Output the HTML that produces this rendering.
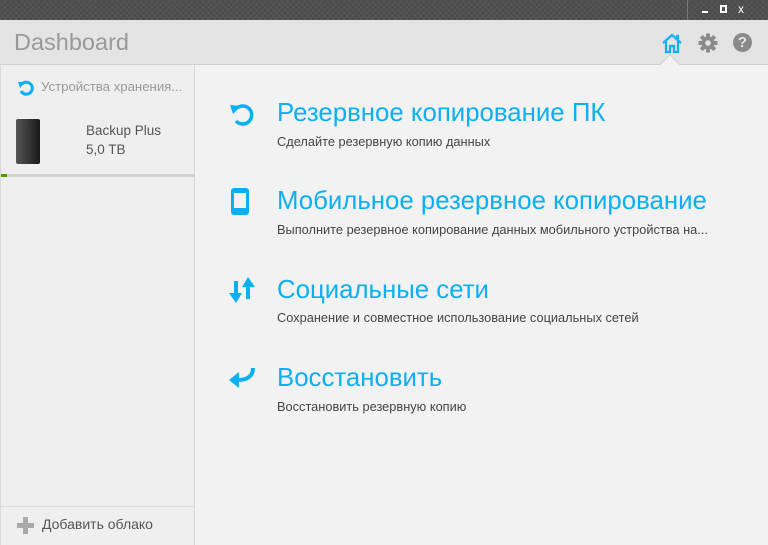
<!DOCTYPE html>
<html><head><meta charset="utf-8"><style>
*{margin:0;padding:0;box-sizing:border-box}
body{width:768px;height:545px;overflow:hidden;font-family:"Liberation Sans",sans-serif;background:#f2f2f2;position:relative}
.tb{position:absolute;left:0;top:0;width:768px;height:20px;background:#4b4b4b;background-image:repeating-linear-gradient(45deg,rgba(255,255,255,.05) 0 1px,transparent 1px 4px),repeating-linear-gradient(-45deg,rgba(255,255,255,.05) 0 1px,transparent 1px 4px)}
.hd{position:absolute;left:0;top:20px;width:768px;height:45px;background:#e4e4e4;border-bottom:1px solid #cfcfcf}
.side{position:absolute;left:0;top:65px;width:195px;height:480px;background:#efefef;border-right:1px solid #d9d9d9;border-left:1px solid #d9d9d9}
.t{position:absolute;color:#0ab0f2;font-size:25.8px;left:277px;white-space:nowrap}
.s{position:absolute;color:#444;font-size:12.8px;left:277px;white-space:nowrap}
</style></head><body>
<div class="tb"><div style="position:absolute;left:687px;top:0;width:1px;height:20px;background:#777"></div>
<div style="position:absolute;left:702px;top:11px;width:6px;height:2px;background:#fff"></div>
<div style="position:absolute;left:720px;top:5px;width:7px;height:8px;border:2px solid #fff"></div>
<div style="position:absolute;left:738px;top:2px;color:#fff;font-size:12px">x</div></div>
<div class="hd"><div style="position:absolute;left:14px;top:9px;font-size:23.5px;color:#999">Dashboard</div>
<svg style="position:absolute;left:661px;top:12px" width="22" height="22" viewBox="0 0 22 22"><path d="M2 11L11 3L20 11M5 9V20H9V14H13V20H17V9M15 4H17V7" fill="none" stroke="#0ab0f2" stroke-width="2.2"/></svg>
<svg style="position:absolute;left:698px;top:13px" width="20" height="20" viewBox="0 0 20 20"><g fill="#8a8a8a"><circle cx="10" cy="10" r="6.5"/><rect x="8" y="0.5" width="4" height="19"/><rect x="0.5" y="8" width="19" height="4"/><rect x="8" y="0.5" width="4" height="19" transform="rotate(45 10 10)"/><rect x="8" y="0.5" width="4" height="19" transform="rotate(-45 10 10)"/></g><circle cx="10" cy="10" r="2.8" fill="#e4e4e4"/></svg>
<div style="position:absolute;left:733px;top:13px;width:19px;height:19px;border-radius:50%;background:#8a8a8a;color:#e4e4e4;font-weight:bold;font-size:15px;text-align:center;line-height:19px">?</div>
<div style="position:absolute;left:663px;top:37px;width:14px;height:14px;background:#f2f2f2;border-left:1px solid #cfcfcf;border-top:1px solid #cfcfcf;transform:rotate(45deg)"></div></div>
<div class="side">
<svg style="position:absolute;left:16px;top:14px" width="18" height="18" viewBox="0 0 18 18"><path d="M5 5A6 6 0 1 1 4 12" fill="none" stroke="#0ab0f2" stroke-width="3"/><path d="M1 3L8 3L3 9Z" fill="#0ab0f2"/></svg>
<div style="position:absolute;left:40px;top:14px;font-size:13.2px;color:#999;white-space:nowrap">Устройства хранения...</div>
<div style="position:absolute;left:15px;top:54px;width:24px;height:45px;background:linear-gradient(90deg,#555,#1a1a1a);border-radius:2px"></div>
<div style="position:absolute;left:85px;top:56px;font-size:13.5px;color:#555;line-height:19px">Backup Plus<br>5,0 TB</div>
<div style="position:absolute;left:0;top:109px;width:194px;height:3px;background:#d4d4d4"></div>
<div style="position:absolute;left:0;top:109px;width:6px;height:3px;background:#4a9a10"></div>
<div style="position:absolute;left:0;top:441px;width:194px;height:1px;background:#dcdcdc"></div>
<div style="position:absolute;left:16px;top:452px;width:17px;height:17px"><div style="position:absolute;left:6px;top:0;width:5px;height:17px;background:#aaa"></div><div style="position:absolute;left:0;top:6px;width:17px;height:5px;background:#aaa"></div></div>
<div style="position:absolute;left:41px;top:451px;font-size:14px;color:#555">Добавить облако</div>
</div>
<svg style="position:absolute;left:228px;top:100px" width="28" height="28" viewBox="0 0 28 28"><path d="M9 8A9 9 0 1 1 8 21" fill="none" stroke="#0ab0f2" stroke-width="3.5"/><path d="M2 5L13 6L5 14Z" fill="#0ab0f2"/></svg>
<div class="t" style="top:99px">Резервное копирование ПК</div><div class="s" style="top:134px">Сделайте резервную копию данных</div>
<div style="position:absolute;left:231px;top:188px;width:18px;height:27px;background:#0ab0f2;border-radius:3px"><div style="position:absolute;left:3px;top:5px;width:12px;height:15px;background:#f2f2f2"></div></div>
<div class="t" style="top:187px">Мобильное резервное копирование</div><div class="s" style="top:222px">Выполните резервное копирование данных мобильного устройства на...</div>
<svg style="position:absolute;left:228px;top:276px" width="28" height="28" viewBox="0 0 28 28"><path d="M6 5H10V17H14L8 27L1 17H6ZM18 23V11H14L20 1L27 11H22V23Z" fill="#0ab0f2"/></svg>
<div class="t" style="top:276px">Социальные сети</div><div class="s" style="top:310px">Сохранение и совместное использование социальных сетей</div>
<svg style="position:absolute;left:228px;top:365px" width="28" height="28" viewBox="0 0 28 28"><path d="M25 3C25 12 18 15 10 15" fill="none" stroke="#0ab0f2" stroke-width="4"/><path d="M1 15L11 7V23Z" fill="#0ab0f2"/></svg>
<div class="t" style="top:364px">Восстановить</div><div class="s" style="top:399px">Восстановить резервную копию</div>
</body></html>
